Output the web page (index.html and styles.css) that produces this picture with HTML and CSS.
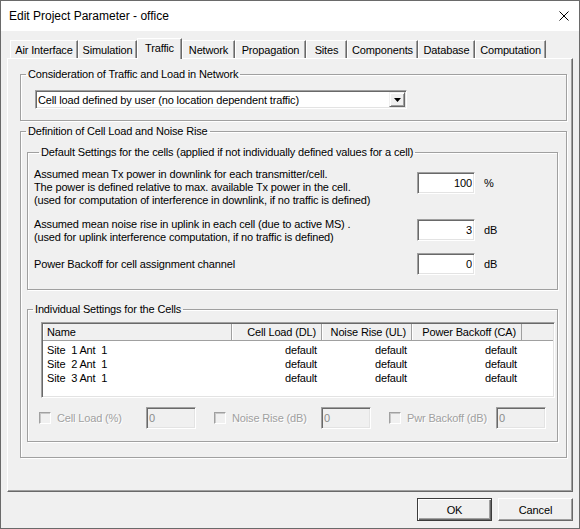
FILE: index.html
```html
<!DOCTYPE html>
<html lang="en">
<head>
  <meta charset="UTF-8">
  <meta name="viewport" content="width=device-width, initial-scale=1.0">
  <title>Edit Project Parameter - office</title>
  <link rel="stylesheet" href="styles.css">
</head>
<body>
  <div class="window">
    <div class="titlebar">
      <span class="title">Edit Project Parameter - office</span>
      <svg class="close" width="10" height="10" viewBox="0 0 10 10">
        <path d="M0.5 0.5L9.5 9.5M9.5 0.5L0.5 9.5" stroke="#000" stroke-width="1"/>
      </svg>
    </div>

    <div class="client">
      <!-- Tab strip -->
      <div class="tabs">
        <div class="tab tab-air">Air Interface</div>
        <div class="tab tab-sim">Simulation</div>
        <div class="tab tab-traffic active">Traffic</div>
        <div class="tab tab-net">Network</div>
        <div class="tab tab-prop">Propagation</div>
        <div class="tab tab-sites">Sites</div>
        <div class="tab tab-comp">Components</div>
        <div class="tab tab-db">Database</div>
        <div class="tab tab-calc">Computation</div>
      </div>

      <div class="panel">
        <!-- Traffic model -->
        <fieldset class="group group-model">
          <legend>Consideration of Traffic and Load in Network</legend>
          <div class="combo">
            <span class="combo-text">Cell load defined by user (no location dependent traffic)</span>
            <span class="combo-btn">
              <svg width="7" height="4" viewBox="0 0 7 4"><path d="M0 0H7L3.5 4Z" fill="#000"/></svg>
            </span>
          </div>
        </fieldset>

        <!-- Cell load and noise rise -->
        <fieldset class="group group-load">
          <legend>Definition of Cell Load and Noise Rise</legend>

          <fieldset class="sub sub-default">
            <legend>Default Settings for the cells (applied if not individually defined values for a cell)</legend>

            <div class="param param-tx">
              <div class="param-text">
                Assumed mean Tx power in downlink for each transmitter/cell.<br>
                The power is defined relative to max. available Tx power in the cell.<br>
                (used for computation of interference in downlink, if no traffic is defined)
              </div>
              <div class="field">
                <input class="num" type="text" value="100" readonly>
                <span class="unit">%</span>
              </div>
            </div>

            <div class="param param-noise">
              <div class="param-text">
                Assumed mean noise rise in uplink in each cell (due to active MS) .<br>
                (used for uplink interference computation, if no traffic is defined)
              </div>
              <div class="field">
                <input class="num" type="text" value="3" readonly>
                <span class="unit">dB</span>
              </div>
            </div>

            <div class="param param-backoff">
              <div class="param-text">Power Backoff for cell assignment channel</div>
              <div class="field">
                <input class="num" type="text" value="0" readonly>
                <span class="unit">dB</span>
              </div>
            </div>
          </fieldset>

          <fieldset class="sub sub-cells">
            <legend>Individual Settings for the Cells</legend>

            <div class="listview">
              <div class="lv-head">
                <div class="lv-cell c-name">Name</div>
                <div class="lv-cell c-num">Cell Load (DL)</div>
                <div class="lv-cell c-num">Noise Rise (UL)</div>
                <div class="lv-cell c-wide">Power Backoff (CA)</div>
                <div class="lv-fill"></div>
              </div>
              <div class="lv-body">
                <div class="lv-row">
                  <div class="lv-cell c-name">Site  1 Ant  1</div>
                  <div class="lv-cell c-num">default</div>
                  <div class="lv-cell c-num">default</div>
                  <div class="lv-cell c-wide">default</div>
                </div>
                <div class="lv-row">
                  <div class="lv-cell c-name">Site  2 Ant  1</div>
                  <div class="lv-cell c-num">default</div>
                  <div class="lv-cell c-num">default</div>
                  <div class="lv-cell c-wide">default</div>
                </div>
                <div class="lv-row">
                  <div class="lv-cell c-name">Site  3 Ant  1</div>
                  <div class="lv-cell c-num">default</div>
                  <div class="lv-cell c-num">default</div>
                  <div class="lv-cell c-wide">default</div>
                </div>
              </div>
            </div>

            <div class="opts">
              <label class="opt"><span class="check"></span>Cell Load (%)</label>
              <input class="num-off" type="text" value="0" disabled>
              <label class="opt"><span class="check"></span>Noise Rise (dB)</label>
              <input class="num-off" type="text" value="0" disabled>
              <label class="opt"><span class="check"></span>Pwr Backoff (dB)</label>
              <input class="num-off" type="text" value="0" disabled>
            </div>
          </fieldset>
        </fieldset>
      </div>

      <!-- Buttons -->
      <div class="actions">
        <button type="button" class="btn btn-default">OK</button>
        <button type="button" class="btn">Cancel</button>
      </div>
    </div>
  </div>
</body>
</html>
```

FILE: styles.css
```css
/* General */
html {
  font-family: "Liberation Sans", Arial, sans-serif;
  font-size: 11px;
  color: #000;
}
body {
  margin: 0;
  background: #fff;
}
.window {
  width: 580px;
  height: 529px;
  box-sizing: border-box;
  border: 1px solid #6a6a6a;
  display: flex;
  flex-direction: column;
}

/* Title bar */
.titlebar {
  flex: none;
  height: 30px;
  display: flex;
  align-items: center;
  justify-content: space-between;
  padding: 0 10px 0 8px;
  background: #fff;
  font-size: 12px;
}

/* Client area */
.client {
  flex: 1;
  background: #f0f0f0;
  padding: 7px 6px 0 6px;
  letter-spacing: -0.15px;
}

/* Tabs */
.tabs {
  display: flex;
  align-items: flex-end;
  height: 20px;
  margin-left: 3px;
}
.tab {
  box-sizing: border-box;
  height: 18px;
  border: 1px solid;
  border-color: #fff #696969 transparent #fff;
  border-bottom: none;
  box-shadow: inset -1px 0 #a0a0a0;
  text-align: center;
  line-height: 18px;
  white-space: nowrap;
}
.tab.active {
  position: relative;
  z-index: 1;
  height: 21px;
  margin-bottom: -1px;
  background: #f0f0f0;
  line-height: 18px;
}
.tab-air { width: 68px; }
.tab-sim { width: 59px; }
.tab-traffic { width: 45px; }
.tab-net { width: 53px; }
.tab-prop { width: 71px; }
.tab-sites { width: 41px; }
.tab-comp { width: 71px; }
.tab-db { width: 57px; }
.tab-calc { width: 71px; }

/* Tab page */
.panel {
  box-sizing: border-box;
  width: 566px;
  height: 434px;
  border: 1px solid;
  border-color: #fff #696969 #696969 #fff;
  box-shadow: inset -1px -1px #a0a0a0;
  padding: 0 5px 0 12px;
}

/* Group boxes */
fieldset {
  margin: 0;
  padding: 0;
  min-width: 0;
  border: 1px solid #a0a0a0;
  box-shadow: 1px 1px #fff, inset 1px 1px #fff;
}
legend {
  margin-left: 5px;
  padding: 0 2px;
  line-height: 13px;
}
.group-model {
  margin-top: 9px;
}
.group-load {
  margin-top: 4px;
  padding-bottom: 15px;
}
.sub {
  margin: 8px 8px 0 6px;
}
.sub-default {
  padding: 9px 0 14px 6px;
}
.sub-cells {
  margin-top: 13px;
  padding-bottom: 12px;
}

/* Combo box */
.combo {
  box-sizing: border-box;
  width: 372px;
  height: 19px;
  margin: 9px 0 11px 14px;
  display: flex;
  align-items: center;
  padding-left: 1px;
  background: #fff;
  border: 1px solid;
  border-color: #a0a0a0 #fff #fff #a0a0a0;
  box-shadow: inset 1px 1px #696969, inset -1px -1px #e3e3e3;
}
.combo-text {
  flex: 1;
  padding-left: 1px;
  white-space: nowrap;
}
.combo-btn {
  box-sizing: border-box;
  width: 16px;
  height: 15px;
  margin-right: 1px;
  display: flex;
  align-items: center;
  justify-content: center;
  background: #f0f0f0;
  border: 1px solid;
  border-color: #f0f0f0 #696969 #696969 #f0f0f0;
  box-shadow: inset 1px 1px #fff, inset -1px -1px #a0a0a0;
}

/* Default parameter rows */
.param {
  display: flex;
  align-items: flex-start;
}
.param-text {
  flex: 1;
  line-height: 13px;
}
.field {
  display: flex;
  align-items: center;
  width: 140px;
}
.param-tx .field { margin-top: 4px; }
.param-noise { margin-top: 11px; }
.param-noise .field { margin-top: 1px; }
.param-backoff {
  margin-top: 9px;
  align-items: center;
}
.num,
.num-off {
  box-sizing: border-box;
  width: 58px;
  height: 22px;
  margin: 0;
  padding: 0 2px 0 2px;
  font: inherit;
  letter-spacing: inherit;
  color: #000;
  text-align: right;
  background: #fff;
  border: 1px solid;
  border-color: #a0a0a0 #fff #fff #a0a0a0;
  box-shadow: inset 1px 1px #696969, inset -1px -1px #e3e3e3;
  outline: none;
}
.unit {
  margin-left: 9px;
}

/* List view */
.listview {
  box-sizing: border-box;
  height: 76px;
  margin: 6px 2px 0 13px;
  background: #fff;
  border: 1px solid;
  border-color: #a0a0a0 #fff #fff #a0a0a0;
  box-shadow: inset 1px 1px #696969, inset -1px -1px #e3e3e3;
  padding: 1px;
}
.lv-head {
  display: flex;
  height: 17px;
  box-sizing: border-box;
  background: #f0f0f0;
  border-bottom: 1px solid #a0a0a0;
  line-height: 16px;
}
.lv-head .lv-cell {
  border-right: 1px solid #a0a0a0;
  box-shadow: inset 1px 0 #fff;
}
.lv-head .c-name {
  padding-left: 6px;
}
.lv-fill {
  flex: 1;
}
.lv-body {
  padding-top: 2px;
}
.lv-row {
  display: flex;
  height: 14px;
  line-height: 14px;
}
.lv-cell {
  box-sizing: border-box;
  flex: none;
  white-space: pre;
  overflow: hidden;
  padding: 0 5px;
  text-align: right;
}
.lv-cell.c-name {
  width: 189px;
  text-align: left;
  padding-left: 4px;
}
.c-num { width: 90px; }
.c-wide { width: 110px; }

/* Disabled option row */
.opts {
  display: flex;
  align-items: center;
  height: 22px;
  margin: 9px 0 0 11px;
}
.opt {
  width: 107px;
  display: flex;
  align-items: center;
  color: #a0a0a0;
  text-shadow: 1px 1px #fff;
  white-space: nowrap;
}
.opt:nth-of-type(n+2) {
  margin-left: 18px;
}
.check {
  box-sizing: border-box;
  width: 12px;
  height: 12px;
  margin-right: 6px;
  border: 1px solid;
  border-color: #a0a0a0 #fff #fff #a0a0a0;
  box-shadow: inset 1px 1px #c8c8c8;
  background: #f0f0f0;
}
.num-off {
  width: 50px;
  text-align: left;
  color: #8c8c8c;
  background: #f0f0f0;
}

/* Buttons */
.actions {
  display: flex;
  justify-content: flex-end;
  gap: 6px;
  margin-top: 6px;
}
.btn {
  box-sizing: border-box;
  width: 75px;
  height: 23px;
  padding: 0;
  font: inherit;
  letter-spacing: inherit;
  color: #000;
  background: #f0f0f0;
  border: 1px solid;
  border-color: #fff #696969 #696969 #fff;
  box-shadow: inset -1px -1px #a0a0a0;
}
.btn-default {
  border-color: #3c3c3c;
  box-shadow: inset 1px 1px #fff, inset -1px -1px #696969, inset -2px -2px #a0a0a0;
}
```
